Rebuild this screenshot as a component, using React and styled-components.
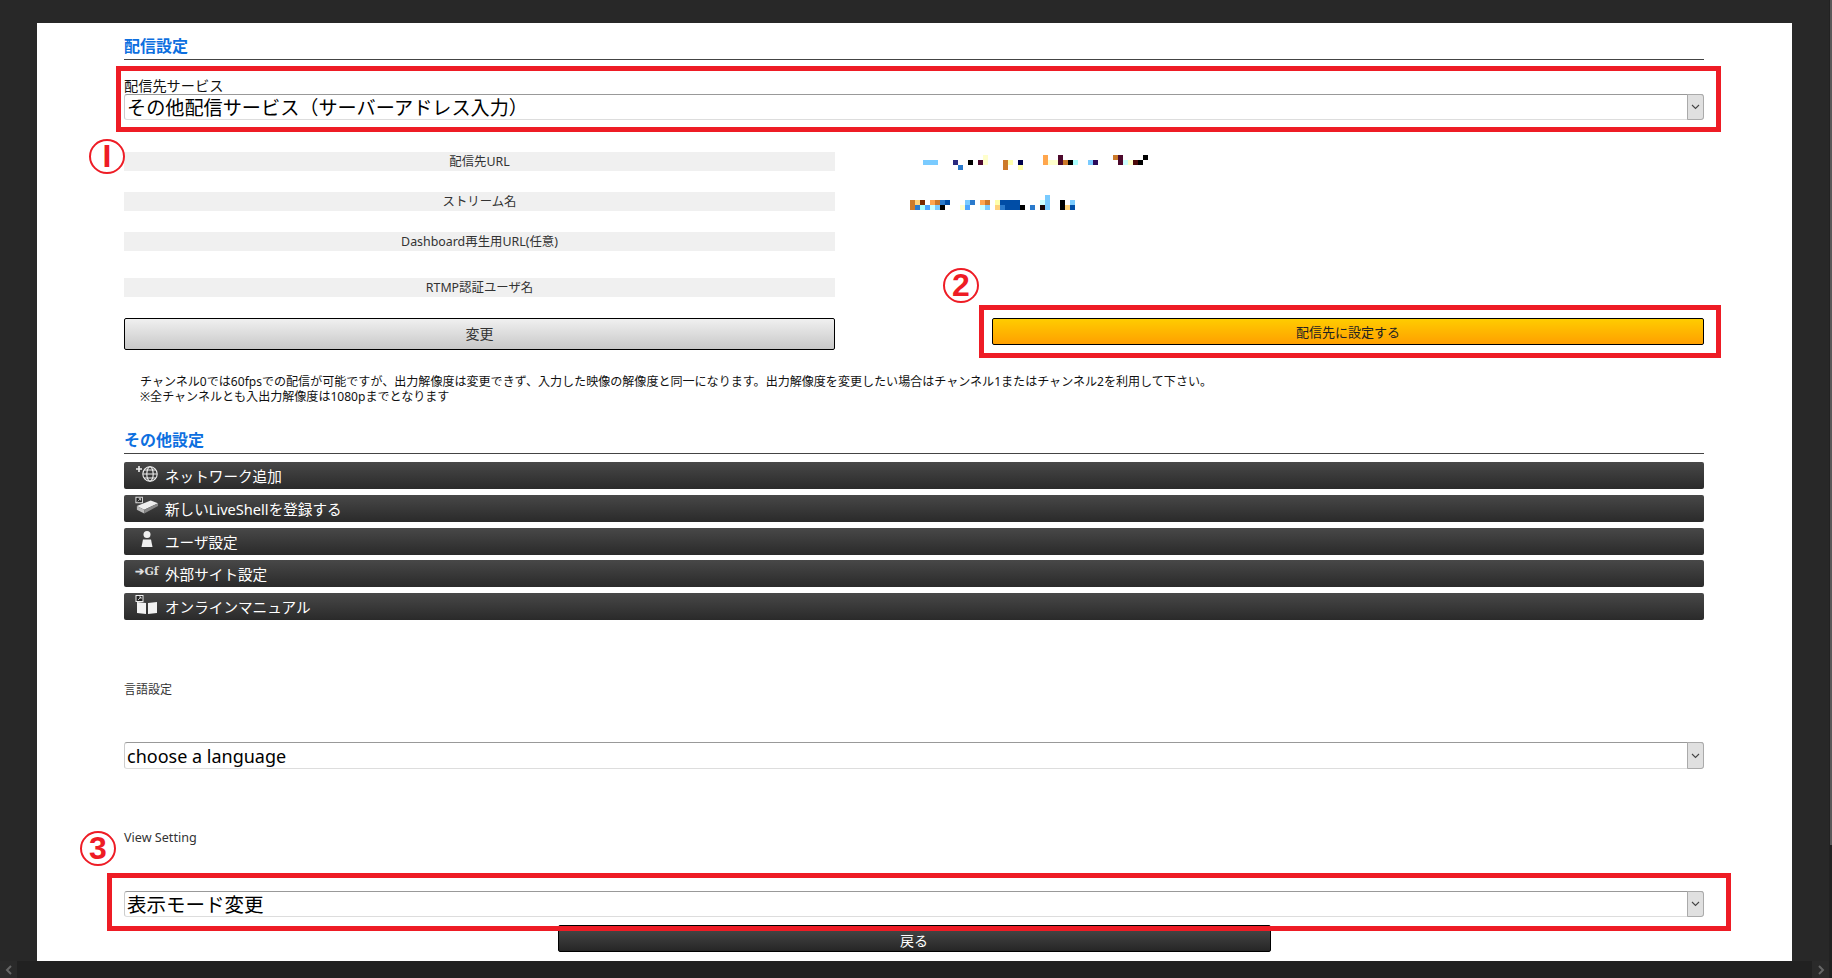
import React from "react";
import styled, { createGlobalStyle } from "styled-components";

const Global = createGlobalStyle`
  html, body { margin: 0; padding: 0; background: #282828; }
  * { box-sizing: border-box; }
`;

const FONT = `"Noto Sans", "Noto Sans CJK JP", sans-serif`;

const Frame = styled.div`
  width: 1832px; height: 978px; overflow: hidden;
  display: flex; flex-direction: column;
  font-family: ${FONT}; color: #333; background: #282828;
`;
const Upper = styled.div`flex: 1; min-height: 0; display: flex;`;
const Stage = styled.div`flex: 1; padding: 23px 37px 0 37px;`;
const ScrollTrack = styled.div`width: 3px; background: #222;`;
const ScrollThumb = styled.div`width: 2px; margin-left: 1px; height: 845px; background: #5a5a5a;`;
const BottomBar = styled.div`
  height: 17px; background: #212121;
  display: flex; justify-content: space-between; padding-right: 3px;
`;
const ArrowBox = styled.div`
  width: 17px; height: 17px; background: #2a2a2a;
  display: flex; align-items: center; justify-content: center;
`;

const Panel = styled.main`
  position: relative; width: 1755px; height: 938px; background: #fff;
  padding: 13px 88px 0 87px;
`;
const SectionHead = styled.h2`
  margin: ${p => p.$top || 0}px 0 0; height: 24px; font-size: 16px; line-height: 21px;
  font-weight: 700; color: #0d6fdf; border-bottom: 1px solid #444;
`;
const SmallLabel = styled.div`
  margin-top: ${p => p.$top}px; font-size: ${p => p.$size || 12}px; line-height: 16px;
  color: ${p => p.$color || "#333"};
`;
const SelectWrap = styled.div`
  position: relative; height: ${p => p.$h || 27}px; margin-top: ${p => p.$top || 0}px;
`;
const Select = styled.select`
  appearance: none; display: block; width: 100%; height: 100%; margin: 0;
  padding: 1px 20px 0 2px; background: #fff; color: #000;
  font-family: ${FONT}; font-size: ${p => p.$size || 19.15}px; line-height: 24px;
  border-style: solid; border-width: 1px; border-color: #999 #ccc #ddd #ccc; border-radius: 3px;
  outline: none;
`;
const SelectArrow = styled.span`
  position: absolute; right: 0; top: 0; bottom: 0; width: 17px;
  background: #e0e0e0; border: 1px solid #aaa; border-radius: 0 3px 3px 0;
  display: flex; align-items: center; justify-content: center; pointer-events: none;
`;

const FormGrid = styled.div`
  margin-top: 32px; display: grid; grid-template-columns: 711px 1fr;
  grid-template-rows: 19px 19px 19px 25px 32px;
  row-gap: 21px;
`;
const FieldLabel = styled.div`
  height: 19px; align-self: end; background: #f0f0f0; font-size: 12.4px; line-height: 19px; text-align: center; color: #333;
`;
const FieldValue = styled.div`padding-left: ${p => p.$pad || 0}px; padding-top: ${p => p.$padTop || 0}px;`;
const LightButton = styled.button`
  display: block; width: 100%; height: 32px; padding: 0 0 2px;
  background: linear-gradient(180deg, #f0f0f0, #c8c8c8);
  border: 1px solid #000; border-radius: 2px; color: #333;
  font-family: ${FONT}; font-size: 14px;
`;
const OrangeCell = styled.div`padding-left: 157px;`;
const OrangeButton = styled.button`
  display: block; width: 712px; height: 27px; padding: 0;
  background: linear-gradient(180deg, #ffcc00, #ffa000);
  border: 1px solid #000; border-radius: 2px; color: #222;
  font-family: ${FONT}; font-size: 13px;
`;
const Note = styled.p`
  margin: 24px 0 0 16px; font-size: 12.05px; line-height: 15px; color: #111;
`;
const MenuList = styled.nav`margin-top: 8px; display: flex; flex-direction: column; gap: 5.75px;`;
const MenuBar = styled.a`
  height: 27px; display: flex; align-items: center; padding: 2px 0 0 11px;
  background: linear-gradient(180deg, #484848, #2a2a2a); border-radius: 2px;
  color: #fff; font-size: 14.6px; line-height: 25px;
`;
const MenuIcon = styled.span`
  width: 24px; height: 24px; margin: -6px 6px 0 0; display: flex; align-items: center; justify-content: center; flex: none;
`;
const GfMark = styled.span`
  font-family: "DejaVu Serif", serif; font-size: 11px; font-weight: 700; white-space: nowrap; color: #ddd;
`;
const BackButton = styled.button`
  display: block; width: 713px; height: 27px; margin: 8px auto 0; padding: 4px 0 0;
  background: linear-gradient(180deg, #4a4a4a, #262626);
  border: 1px solid #000; border-radius: 2px; color: #fff;
  font-family: ${FONT}; font-size: 14px; line-height: 20px;
`;
const RedFrame = styled.div`
  position: absolute; left: ${p => p.$x - 37}px; top: ${p => p.$y - 23}px;
  width: ${p => p.$w}px; height: ${p => p.$h}px;
  border: 5px solid #ee1c25; pointer-events: none;
`;
const Badge = styled.span`
  position: absolute; left: ${p => p.$x - 37}px; top: ${p => p.$y - 23}px;
  width: 36px; height: 35px; border-radius: 50%; border: 2px solid #ee1c25;
  color: #ee1c25; font-family: "Liberation Sans", sans-serif; font-size: 32px; font-weight: 700;
  line-height: 31px; text-align: center;
`;

const Chevron = ({ left }) => (
  <svg width="8" height="10" viewBox="0 0 8 10">
    <path d={left ? "M6 1L2 5l4 4" : "M2 1l4 4-4 4"} fill="none" stroke="#666" strokeWidth="2" />
  </svg>
);
const SelectChevron = () => (
  <svg width="9" height="6" viewBox="0 0 9 6"><path d="M1 1l3.5 3.5L8 1" fill="none" stroke="#444" strokeWidth="1.1" /></svg>
);
const Dropdown = ({ value, h, top, size }) => (
  <SelectWrap $h={h} $top={top}>
    <Select $size={size} defaultValue={value}><option>{value}</option></Select>
    <SelectArrow><SelectChevron /></SelectArrow>
  </SelectWrap>
);

const ROW1 = [
  [369,155,"#ffffcc"],[549,155,"#ffa64d"],[594,155,"#4d0a2d"],[759,155,"#cc7a29"],[774,155,"#4d0a2d"],[849,155,"#000"],
  [189,160,"#7acbff"],[204,160,"#7acbff"],[219,160,"#7acbff"],[279,160,"#2a2a80"],[324,160,"#000"],[354,160,"#4d0a2d"],[369,160,"#ffffcc"],
  [429,160,"#cc7a29"],[444,160,"#ffffaa"],[474,160,"#00004d"],[549,160,"#ffa64d"],[564,160,"#ffffcc"],[579,160,"#ffffcc"],[594,160,"#4d0a2d"],
  [609,160,"#cc7a29"],[624,160,"#000"],[639,160,"#aaffff"],[684,160,"#7acbff"],[699,160,"#2a0a5a"],[774,160,"#4d0a2d"],[789,160,"#ccffff"],
  [804,160,"#ffffcc"],[819,160,"#4d0a0a"],[834,160,"#000"],
  [294,165,"#2a7acc"],[429,165,"#cc7a29"],[474,165,"#ffffaa"],
];
const ROW2 = [
  [555,195,"#7acbff"],
  [150,200,"#cc7a29"],[165,200,"#ffd27a"],[180,200,"#7a2a00"],[210,200,"#ffa64d"],[225,200,"#cc7a29"],[240,200,"#2a7acc"],[255,200,"#004da6"],
  [315,200,"#7acbff"],[330,200,"#2a7acc"],[360,200,"#ffa64d"],[375,200,"#cc7a29"],[405,200,"#ffffaa"],[420,200,"#004da6"],[435,200,"#004da6"],
  [450,200,"#004da6"],[465,200,"#004da6"],[540,200,"#ccffff"],[555,200,"#7acbff"],[600,200,"#000"],[630,200,"#7acbff"],
  [150,205,"#cc7a29"],[165,205,"#2a7acc"],[180,205,"#aaffff"],[195,205,"#4da6ff"],[210,205,"#ccffff"],[225,205,"#7acbff"],[240,205,"#000"],
  [300,205,"#ffffcc"],[315,205,"#4da6ff"],[360,205,"#ccffff"],[375,205,"#7acbff"],[405,205,"#ffd27a"],[420,205,"#2a7acc"],[435,205,"#004da6"],
  [450,205,"#004da6"],[465,205,"#004da6"],[480,205,"#000"],[510,205,"#2a7acc"],[540,205,"#1a0505"],[555,205,"#7acbff"],[600,205,"#000"],
  [615,205,"#ffd27a"],[630,205,"#004da6"],
];
// Blocks are 5px; x values are in 3x crop units from x=860
const Mosaic = ({ cells, y0 }) => (
  <svg width="300" height="15" viewBox={`0 ${y0} 300 15`} shapeRendering="crispEdges" style={{ display: "block" }}>
    {cells.map(([x, y, c], i) => <rect key={i} x={x / 3} y={y} width="5" height="5" fill={c} />)}
  </svg>
);

const PlusGlobe = () => (
  <svg width="24" height="20" viewBox="0 0 24 20" fill="none" stroke="#eee" strokeWidth="1.1">
    <path d="M1 5h6M4 2v6" strokeWidth="1.6" />
    <circle cx="15" cy="10" r="7.2" />
    <ellipse cx="15" cy="10" rx="3.2" ry="7.2" />
    <path d="M8 10h14M9 6h12M9 14h12" />
  </svg>
);
const ShellIcon = () => (
  <svg width="26" height="20" viewBox="0 0 26 20">
    <rect x="1" y="0.5" width="7" height="6" fill="#222" stroke="#eee" />
    <path d="M3 5l3-3M4 2h2v2" stroke="#eee" fill="none" strokeWidth=".8" />
    <path d="M2 10L17 4l8 3-15 7z" fill="#eee" />
    <path d="M2 10l8 4v4l-8-4z" fill="#bbb" />
    <path d="M10 14l15-7v3l-15 8z" fill="#888" />
  </svg>
);
const PersonIcon = () => (
  <svg width="16" height="18" viewBox="0 0 16 18" fill="#f0f0f0">
    <circle cx="8" cy="4.5" r="3.5" />
    <path d="M2.5 17l1.5-7.5h8l1.5 7.5z" />
  </svg>
);
const BookIcon = () => (
  <svg width="24" height="20" viewBox="0 0 24 20">
    <rect x="1" y="0.5" width="7" height="6" fill="#222" stroke="#eee" />
    <path d="M3 5l3-3M4 2h2v2" stroke="#eee" fill="none" strokeWidth=".8" />
    <path d="M2 7l9 1v11l-9-1zM13 8l9-1v11l-9 1z" fill="#f2f2f2" />
  </svg>
);

const MENU = [
  { label: "ネットワーク追加", icon: <PlusGlobe /> },
  { label: "新しいLiveShellを登録する", icon: <ShellIcon /> },
  { label: "ユーザ設定", icon: <PersonIcon /> },
  { label: "外部サイト設定", icon: <GfMark>➔Gf</GfMark> },
  { label: "オンラインマニュアル", icon: <BookIcon /> },
];

export default function App() {
  return (
    <Frame>
      <Global />
      <Upper>
        <Stage>
          <Panel>
            <SectionHead>配信設定</SectionHead>
            <SmallLabel $top={18} $size={14.2} $color="#111">配信先サービス</SmallLabel>
            <Dropdown value={"その他配信サービス\uFF08サーバーアドレス入力\uFF09"} h={26} />
            <FormGrid>
              <FieldLabel>配信先URL</FieldLabel>
              <FieldValue $padTop={3} $pad={25}><Mosaic cells={ROW1} y0={155} /></FieldValue>
              <FieldLabel>ストリーム名</FieldLabel>
              <FieldValue $padTop={3} $pad={25}><Mosaic cells={ROW2} y0={195} /></FieldValue>
              <FieldLabel>Dashboard再生用URL(任意)</FieldLabel>
              <FieldValue />
              <FieldLabel>RTMP認証ユーザ名</FieldLabel>
              <FieldValue />
              <LightButton>変更</LightButton>
              <OrangeCell><OrangeButton>配信先に設定する</OrangeButton></OrangeCell>
            </FormGrid>
            <Note>
              チャンネル0では60fpsでの配信が可能ですが、出力解像度は変更できず、入力した映像の解像度と同一になります。出力解像度を変更したい場合はチャンネル1またはチャンネル2を利用して下さい。<br />
              ※全チャンネルとも入出力解像度は1080pまでとなります
            </Note>
            <SectionHead $top={26}>その他設定</SectionHead>
            <MenuList>
              {MENU.map(m => (
                <MenuBar key={m.label}><MenuIcon>{m.icon}</MenuIcon>{m.label}</MenuBar>
              ))}
            </MenuList>
            <SmallLabel $top={62}>言語設定</SmallLabel>
            <Dropdown value="choose a language" top={44} size={18} />
            <SmallLabel $top={61} $size={12.6}>View Setting</SmallLabel>
            <Dropdown value="表示モード変更" top={45} h={26} size={19.5} />
            <BackButton>戻る</BackButton>

            <RedFrame $x={116} $y={66} $w={1605} $h={66} />
            <RedFrame $x={979} $y={305} $w={742} $h={53} />
            <RedFrame $x={107} $y={873} $w={1624} $h={58} />
            <Badge $x={89} $y={139}>I</Badge>
            <Badge $x={943} $y={268}>2</Badge>
            <Badge $x={80} $y={831}>3</Badge>
          </Panel>
        </Stage>
        <ScrollTrack><ScrollThumb /></ScrollTrack>
      </Upper>
      <BottomBar>
        <ArrowBox><Chevron left /></ArrowBox>
        <ArrowBox><Chevron /></ArrowBox>
      </BottomBar>
    </Frame>
  );
}
